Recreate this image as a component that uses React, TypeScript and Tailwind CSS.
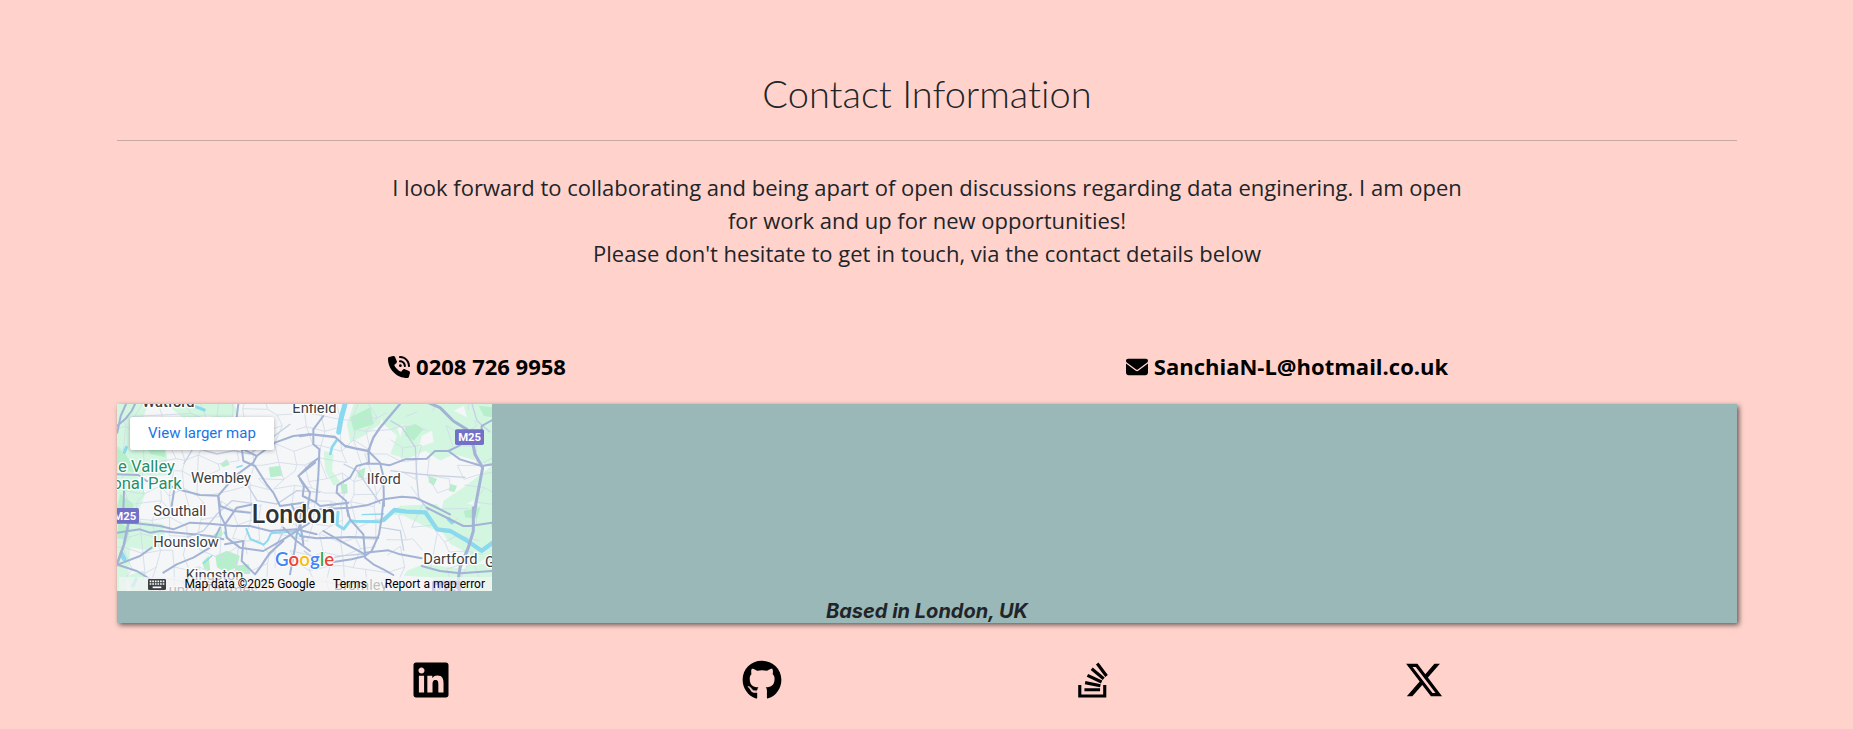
import {
  FaEnvelope,
  FaGithub,
  FaLinkedin,
  FaPhoneVolume,
  FaStackOverflow,
  FaXTwitter,
} from "react-icons/fa6";

const socials = [
  { label: "LinkedIn", Icon: FaLinkedin },
  { label: "GitHub", Icon: FaGithub },
  { label: "Stack Overflow", Icon: FaStackOverflow },
  { label: "X", Icon: FaXTwitter },
];

// Thin side streets: a jittered mesh with some of its edges left out.
function streets(): string {
  let seed = 11;
  const rnd = () => {
    seed = (seed * 16807) % 2147483647;
    return seed / 2147483647;
  };
  const step = 46;
  const cols = 27;
  const rows = 14;
  const pts: number[][][] = [];
  for (let r = 0; r < rows; r++) {
    pts.push([]);
    for (let c = 0; c < cols; c++) {
      pts[r].push([
        Math.round(c * step - 20 + (rnd() - 0.5) * 38),
        Math.round(r * step - 15 + (rnd() - 0.5) * 38),
      ]);
    }
  }
  let d = "";
  for (let r = 0; r < rows - 1; r++) {
    for (let c = 0; c < cols - 1; c++) {
      const [x, y] = pts[r][c];
      const density = c > 17 ? 0.42 : 0.72;
      if (rnd() < density) d += `M${x} ${y}L${pts[r][c + 1][0]} ${pts[r][c + 1][1]}`;
      if (rnd() < density) d += `M${x} ${y}L${pts[r + 1][c][0]} ${pts[r + 1][c][1]}`;
    }
  }
  return d;
}

function LondonMap() {
  return (
    <svg viewBox="0 0 1125 561" preserveAspectRatio="none" className="block h-full w-full" aria-label="Map of London" role="img">
      <rect width="1125" height="561" fill="#f5f6f8" />

      <g fill="#d2f6e0">
        <path d="M0 0H95L70 60 45 90 100 120 150 150 150 215 0 215Z" />
        <path d="M150 0H350L365 25 330 45 270 35 200 45Z" />
        <path d="M0 215H60L85 270 60 330 0 330Z" />
        <path d="M780 0H1125V190L1080 170 1010 150 970 170 925 140 870 165 820 150 840 95 800 60Z" />
        <path d="M710 0H800L790 60 740 95 700 115 690 60Z" />
        <path d="M1125 185V560H1060L1040 440 1000 420 960 360 980 290 1040 250Z" />
        <path d="M815 330 850 305 960 300 1000 350 990 390 930 370 860 335Z" />
        <path d="M0 340 60 350 140 360 145 420 100 440 40 430 30 561 0 561Z" />
        <path d="M620 140 650 150 645 200 670 235 650 245 625 200Z" />
        <path d="M870 500 920 480 1040 495 1125 490V561H1000L940 520 860 515Z" />
        <path d="M30 515 80 500 110 561H40Z" />
      </g>
      <g fill="#b7efcc">
        <path d="M70 70 100 40 150 60 145 160 100 150Z" />
        <path d="M0 130 25 150 60 205 0 200Z" />
        <path d="M10 270 50 300 45 335 0 310Z" />
        <path d="M310 180 330 165 338 182 318 190Z" />
        <path d="M455 190 490 185 495 215 460 220Z" />
        <path d="M865 70 895 60 920 75 890 110 865 95Z" />
        <path d="M700 40 760 10 770 60 710 80Z" />
        <path d="M935 215 960 225 950 245 935 235Z" />
        <path d="M725 200 745 190 740 225 722 220Z" />
        <path d="M670 240 690 240 692 268 675 270Z" />
        <path d="M295 455 330 440 368 455 360 490 325 505 300 490Z" />
        <path d="M280 400 312 375 318 390 300 410Z" />
        <path d="M255 475 275 455 280 500 262 495Z" />
        <path d="M355 485 395 480 400 510 355 510Z" />
        <path d="M1040 320 1090 310 1080 345 1045 340Z" />
        <path d="M1085 5 1125 10V40L1100 35Z" />
        <path d="M5 355 40 375 30 410 0 400Z" />
        <path d="M1000 240 1020 245 1012 265 995 260Z" />
      </g>
      <g fill="#f5f6f8">
        <path d="M915 95 945 80 950 115 905 130Z" />
        <path d="M1010 20 1040 5 1050 40Z" />
        <path d="M1050 300 1075 285 1090 305Z" />
        <path d="M1080 480 1110 460 1115 480Z" />
        <path d="M840 70 860 60 850 100Z" />
      </g>

      <path d={streets()} stroke="#d3dce8" strokeWidth="2.6" fill="none" />

      <g fill="none" stroke="#8ad9ef" strokeLinejoin="round" strokeLinecap="round">
        <path d="M684 0 672 45 665 85" strokeWidth="15" />
        <path d="M658 110 645 130 640 150" strokeWidth="8" />
        <path d="M388 375 400 405 440 422 452 410 462 388 535 382 560 400" strokeWidth="6" />
        <path d="M663 325 660 362 680 375 700 350 712 352 790 353 805 342" strokeWidth="9" />
        <path d="M735 332 800 330" strokeWidth="4" />
        <path d="M800 348 832 318 868 323 925 325 960 376 1000 381 1050 410 1094 440 1130 414" strokeWidth="13" />
        <path d="M260 478 285 455" strokeWidth="4" />
        <path d="M322 385 332 402" strokeWidth="5" />
        <path d="M360 190 375 185" strokeWidth="5" />
        <path d="M235 8 262 18" strokeWidth="9" />
        <path d="M14 450 22 465" strokeWidth="14" />
        <path d="M28 130 22 145" strokeWidth="9" />
        <path d="M58 525 48 545" strokeWidth="10" />
        <path d="M995 345 1005 355" strokeWidth="12" />
      </g>

      <g fill="none" stroke="#c5d0e3" strokeWidth="4" strokeLinejoin="round">
        <path d="M200 180 230 130 300 150 350 140 400 150 440 120 520 60" />
        <path d="M210 400 260 380 300 330 345 290 420 300" />
        <path d="M390 240 420 290 480 300 540 260 610 265" />
        <path d="M820 50 855 70 895 130 900 230 905 280 935 320" />
        <path d="M820 200 900 210 960 215 1045 220" />
        <path d="M1065 0 1080 50 1120 85" />
        <path d="M560 440 600 470 680 455 740 450" />
        <path d="M500 380 470 440 440 470" />
        <path d="M790 370 850 380 860 440" />
        <path d="M680 180 720 200 790 300" />
        <path d="M560 300 600 330 660 300" />
      </g>

      <g fill="none" stroke="#a3b3d5" strokeWidth="6" strokeLinejoin="round" strokeLinecap="round">
        <g transform="translate(-21 -24)">
          <path d="M75 24 65 45 45 70 21 90" />
          <path d="M48 24 32 60 22 110" />
          <path d="M21 235 85 237 110 255 160 262 215 283 270 297 325 299 375 240 430 200 440 180 495 140 550 120 600 115" />
          <path d="M395 155 400 195 435 210 470 265 490 290 510 330 580 320" />
          <path d="M325 299 330 330 370 345 420 350" />
          <path d="M192 285 185 330" />
          <path d="M385 24 380 65" />
          <path d="M615 200 565 240 600 290 590 350" />
          <path d="M42 285 40 345" />
          <path d="M400 160 440 180" />
        </g>
        <g transform="translate(549 -24)">
          <path d="M0 120 35 115 105 123 135 150 165 157 205 165 220 125 240 95 300 24" strokeWidth="7" />
          <path d="M70 60 40 100 40 145 58 160 57 190 55 240 48 320 60 330 145 320" />
          <path d="M205 165 207 200 170 210 150 245 112 268 110 290 138 315 145 360" />
          <path d="M205 165 240 200 250 240 252 330" />
          <path d="M200 203 240 203 268 208 315 190 380 188 405 165 445 165 480 148" />
          <path d="M445 165 480 190 545 210 577 205" />
          <path d="M385 20 420 35 460 75 500 100 520 150 525 175 548 215 530 310 522 360" strokeWidth="9" />
          <path d="M60 340 150 335 200 328 250 310 305 302 345 305 400 330 450 355" />
          <path d="M577 72 545 90 545 110" />
          <path d="M0 235 30 205 58 185" />
          <path d="M0 250 12 270 8 300 45 318" />
        </g>
        <g transform="translate(-21 291)">
          <path d="M21 60 90 68 150 75 190 85 240 65 300 68 370 75 420 75" />
          <path d="M21 95 90 85 120 95 150 90 250 100 300 105 340 115" />
          <path d="M25 190 90 165 125 140" />
          <path d="M160 215 200 190 250 170 300 140 330 80" />
          <path d="M325 -10 330 40 345 70 350 110 390 140 460 150 520 115 600 65" />
          <path d="M345 130 400 120 395 180 435 220 450 200 480 155 520 120" />
          <path d="M55 68 42 130 21 190" strokeWidth="8" />
          <path d="M21 190 80 210 130 240 150 269" />
          <path d="M545 10 570 70 560 100 555 140 540 220" />
          <path d="M420 75 480 90 560 85 620 100" />
          <path d="M520 80 560 120 600 150" />
          <path d="M345 70 380 20 430 10" />
        </g>
        <g transform="translate(549 291)">
          <path d="M140 20 150 55 190 100 195 160" />
          <path d="M250 0 245 50 237 100 215 150 195 165" />
          <path d="M0 105 50 112 100 110 150 108 235 110" />
          <path d="M70 90 130 125 195 160" />
          <path d="M195 155 265 148 300 160 365 172" />
          <path d="M195 170 220 190 250 205 280 222" />
          <path d="M520 20 520 90 505 140 480 200 475 235" strokeWidth="9" />
          <path d="M365 195 420 210 480 217 577 210" />
          <path d="M380 20 430 45 490 75 510 75 577 65" />
          <path d="M100 183 155 175 195 165" />
          <path d="M5 20 0 60 10 130" />
        </g>
      </g>

      <g fontFamily="Roboto, sans-serif" fontSize="44" fill="#3c4043" stroke="#ffffff" strokeWidth="8" strokeLinejoin="round" paintOrder="stroke">
        <text x="76" y="9" fontWeight="500">Watford</text>
        <text x="526" y="28">Enfield</text>
        <text x="222" y="238">Wembley</text>
        <text x="749" y="239">Ilford</text>
        <text x="109" y="337">Southall</text>
        <text x="109" y="428">Hounslow</text>
        <text x="206" y="528">Kingston</text>
        <text x="155" y="574">upon Thames</text>
        <text x="651" y="559">Bromley</text>
        <text x="919" y="481">Dartford</text>
        <text x="1104" y="489">G</text>
        <text x="174" y="204" textAnchor="end" fontSize="50" fill="#26906a">e Valley</text>
        <text x="194" y="255" textAnchor="end" fontSize="50" fill="#26906a">onal Park</text>
        <text x="404" y="357" fontSize="75" fontWeight="500" fill="#303236">London</text>
      </g>

      <g fontFamily="Roboto, sans-serif" fontSize="34" fontWeight="700" fill="#ffffff" textAnchor="middle">
        <rect x="1014" y="76" width="87" height="47" rx="5" fill="#7370c8" />
        <text x="1058" y="112">M25</text>
        <rect x="-20" y="312" width="86" height="47" rx="5" fill="#7370c8" />
        <text x="23" y="348">M25</text>
        <rect x="945" y="530" width="87" height="47" rx="5" fill="#7370c8" />
        <text x="988" y="566">M25</text>
      </g>

      <text x="474" y="486" fontFamily="Lato, sans-serif" fontSize="56" fontWeight="600" stroke="#ffffff" strokeWidth="6" paintOrder="stroke">
        <tspan fill="#4285f4">G</tspan>
        <tspan fill="#ea4335">o</tspan>
        <tspan fill="#fbbc04">o</tspan>
        <tspan fill="#4285f4">g</tspan>
        <tspan fill="#34a853">l</tspan>
        <tspan fill="#ea4335">e</tspan>
      </text>
    </svg>
  );
}

function KeyboardIcon() {
  return (
    <svg viewBox="0 0 54 33" className="h-[11px] w-[18px]" aria-hidden="true">
      <rect width="54" height="33" rx="4" fill="#3c4043" />
      <path d="M5 7H49M5 15H49" stroke="#ffffff" strokeWidth="5" strokeDasharray="5 2.8" />
      <path d="M14 25H40" stroke="#ffffff" strokeWidth="5" />
    </svg>
  );
}

export default function App() {
  return (
    <main className="min-h-screen bg-[#ffd3cc] pt-[69px] pr-[116px] pb-7 pl-[117px] font-['Open_Sans',sans-serif] text-[#212529]">
      <h1 className="text-center font-['Lato',sans-serif] text-[38px] leading-12 font-light [font-variant-ligatures:none]">
        Contact Information
      </h1>
      <hr className="mt-[23px] border-[#c8a8a4]" />

      <p className="mx-auto mt-[30px] max-w-[1100px] text-center text-[22px] leading-[33px] font-medium">
        I look forward to collaborating and being apart of open discussions regarding data enginering. I am open
        <br />
        for work and up for new opportunities!
        <br />
        Please don't hesitate to get in touch, via the contact details below
      </p>

      <div className="mt-20 grid grid-cols-2 text-[22px] leading-[33px] font-bold text-black">
        <div className="flex justify-center pr-[90px]">
          <a href="tel:02087269958" className="flex items-center gap-1.5">
            <FaPhoneVolume aria-hidden="true" />
            0208 726 9958
          </a>
        </div>
        <div className="flex justify-center pr-[90px]">
          <a href="mailto:SanchiaN-L@hotmail.co.uk" className="flex items-center gap-1.5">
            <FaEnvelope aria-hidden="true" />
            SanchiaN-L@hotmail.co.uk
          </a>
        </div>
      </div>

      <section className="mt-[21px] bg-[#9ab8b7] shadow-[2px_2px_5px_rgba(0,0,0,0.6)]">
        <div className="relative h-[187px] w-[375px] overflow-hidden font-['Roboto',sans-serif]">
          <LondonMap />
          <a
            href="#map"
            className="absolute top-[13px] left-[13px] rounded-xs bg-white px-[18px] py-1.5 text-[15px] leading-[21px] text-[#1a73e8] shadow-[0_1px_4px_rgba(0,0,0,0.3)]"
          >
            View larger map
          </a>
          <div className="absolute right-0 bottom-0 flex h-[14px] items-center bg-[#f5f5f5]/70 pr-[7px] pl-[29px] text-[12px] leading-[14px] whitespace-nowrap text-black">
            <button type="button" aria-label="Keyboard shortcuts" className="mr-[18px]">
              <KeyboardIcon />
            </button>
            <span>Map data ©2025 Google</span>
            <a href="#terms" className="ml-[18px]">
              Terms
            </a>
            <a href="#report" className="ml-[18px]">
              Report a map error
            </a>
          </div>
        </div>
        <p className="pt-2 text-center font-['Inter',sans-serif] text-[20px] leading-6 font-bold italic">
          Based in London, UK
        </p>
      </section>

      <nav className="mt-[37px] grid grid-cols-4 px-[148px] text-[40px] text-black" aria-label="Social links">
        {socials.map(({ label, Icon }) => (
          <a key={label} href={`#${label}`} aria-label={label} className="flex justify-center">
            <Icon />
          </a>
        ))}
      </nav>
    </main>
  );
}
